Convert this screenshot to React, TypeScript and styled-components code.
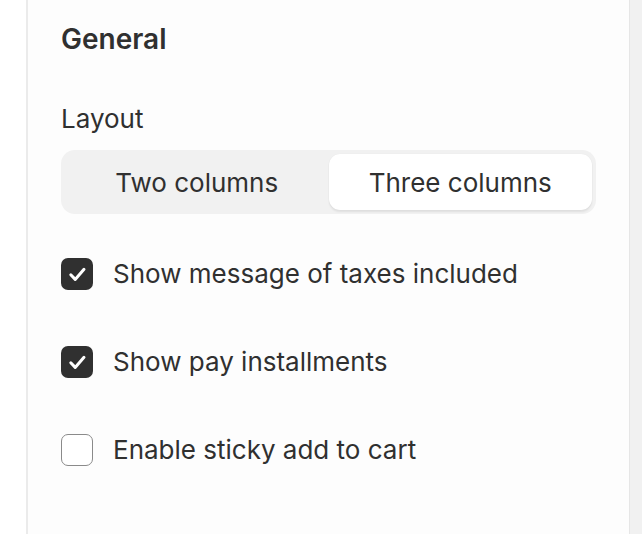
import React from "react";
import styled, { createGlobalStyle } from "styled-components";

const Global = createGlobalStyle`
  html, body { margin: 0; padding: 0; background: #ffffff; }
  body { font-family: Inter, "Noto Sans", sans-serif; color: #303030; }
  * { box-sizing: border-box; }
`;

const Page = styled.div`
  display: flex;
  width: 642px;
  height: 534px;
  overflow: hidden;
`;

const Gutter = styled.div`
  width: 26px;
  flex: none;
  background: #ffffff;
`;

const Panel = styled.div`
  flex: 1;
  border-left: 2px solid #ebebeb;
  padding: 22px 33px 0 33px;
  background: #fdfdfd;
  display: flex;
  flex-direction: column;
`;

const Scroll = styled.div`
  width: 14px;
  flex: none;
  background: #f1f1f1;
  border-left: 1px solid #e6e6e6;
`;

const Heading = styled.h2`
  margin: 0;
  font-size: 28px;
  line-height: 34px;
  font-weight: 600;
`;

const Label = styled.div`
  margin-top: 47px;
  font-size: 26px;
  line-height: 31px;
  font-weight: 400;
`;

const Segmented = styled.div`
  margin-top: 16px;
  display: grid;
  grid-template-columns: 1fr 1fr;
  padding: 4px;
  height: 64px;
  width: 535px;
  background: #f1f1f1;
  border-radius: 14px;
`;

const Segment = styled.button<{ $active?: boolean }>`
  border: 0;
  font-family: inherit;
  font-size: 26px;
  color: #303030;
  border-radius: 11px;
  background: ${(p) => (p.$active ? "#ffffff" : "transparent")};
  box-shadow: ${(p) =>
    p.$active ? "0 2px 2px rgba(0,0,0,0.07), 0 0 1px rgba(0,0,0,0.08)" : "none"};
  display: flex;
  align-items: center;
  justify-content: center;
  padding: 0;
`;

const Options = styled.div`
  margin-top: 44px;
  display: flex;
  flex-direction: column;
  gap: 56px;
`;

const Row = styled.label`
  display: flex;
  align-items: center;
  gap: 20px;
  font-size: 26px;
  line-height: 32px;
`;

const Box = styled.span<{ $checked?: boolean }>`
  width: 32px;
  height: 32px;
  flex: none;
  border-radius: 7px;
  background: ${(p) => (p.$checked ? "#303030" : "#ffffff")};
  border: ${(p) => (p.$checked ? "none" : "1.5px solid #8a8a8a")};
  display: flex;
  align-items: center;
  justify-content: center;
`;

const Check = () => (
  <svg width="32" height="32" viewBox="0 0 32 32" fill="none">
    <path
      d="M9.8 16.8l4.4 4.6L23 11.3"
      stroke="#ffffff"
      strokeWidth="3"
      strokeLinecap="round"
      strokeLinejoin="round"
    />
  </svg>
);

const Checkbox = ({ checked, label }: { checked?: boolean; label: string }) => (
  <Row>
    <Box $checked={checked}>{checked && <Check />}</Box>
    <span>{label}</span>
  </Row>
);

export default function App() {
  return (
    <Page>
      <Global />
      <Gutter />
      <Panel>
        <Heading>General</Heading>
        <Label>Layout</Label>
        <Segmented>
          <Segment>Two columns</Segment>
          <Segment $active>Three columns</Segment>
        </Segmented>
        <Options>
          <Checkbox checked label="Show message of taxes included" />
          <Checkbox checked label="Show pay installments" />
          <Checkbox label="Enable sticky add to cart" />
        </Options>
      </Panel>
      <Scroll />
    </Page>
  );
}
